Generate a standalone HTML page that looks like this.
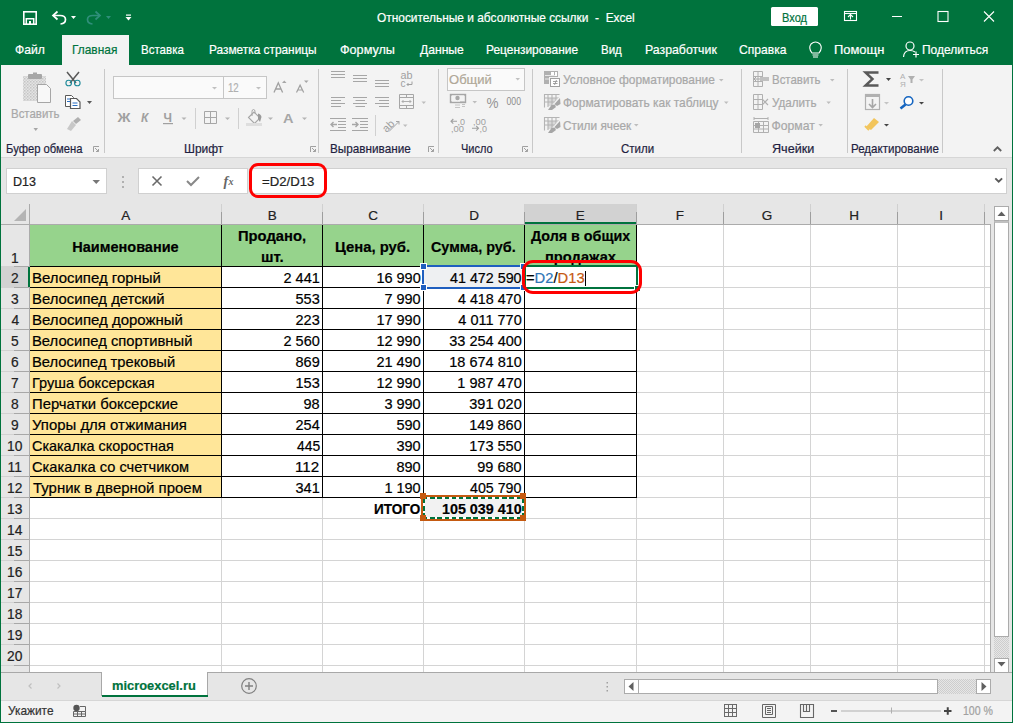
<!DOCTYPE html>
<html><head><meta charset="utf-8">
<style>
html,body{margin:0;padding:0;}
body{width:1013px;height:723px;position:relative;overflow:hidden;background:#e6e6e6;font-family:"Liberation Sans",sans-serif;}
.a{position:absolute;box-sizing:border-box;}
.t{position:absolute;white-space:pre;transform-origin:0 0;-webkit-text-stroke:0.2px currentColor;}
svg{position:absolute;overflow:visible;}
</style></head><body>
<!-- title + tabs -->
<div class="a" style="left:0;top:0;width:1013px;height:65px;background:#00733d"></div>
<div class="a" style="left:62px;top:35px;width:67px;height:30px;background:#f3f3f3"></div>
<!-- ribbon -->
<div class="a" style="left:0;top:65px;width:1013px;height:92px;background:#f3f3f3"></div>
<div class="a" style="left:0;top:157px;width:1013px;height:1px;background:#d6d6d6"></div>
<!-- group separators -->
<div class="a" style="left:104px;top:69px;width:1px;height:84px;background:#c8c8c8"></div>
<div class="a" style="left:318px;top:69px;width:1px;height:84px;background:#c8c8c8"></div>
<div class="a" style="left:438px;top:69px;width:1px;height:84px;background:#c8c8c8"></div>
<div class="a" style="left:532px;top:69px;width:1px;height:84px;background:#c8c8c8"></div>
<div class="a" style="left:741px;top:69px;width:1px;height:84px;background:#c8c8c8"></div>
<div class="a" style="left:847px;top:69px;width:1px;height:84px;background:#c8c8c8"></div>
<div class="a" style="left:942px;top:69px;width:1px;height:84px;background:#c8c8c8"></div>
<!-- formula bar -->
<div class="a" style="left:6px;top:168px;width:101px;height:26px;background:#fff;border:1px solid #d0d0d0"></div>
<div class="a" style="left:138px;top:168px;width:110px;height:26px;background:#fff;border:1px solid #d0d0d0"></div>
<div class="a" style="left:250px;top:168px;width:757px;height:26px;background:#fff;border:1px solid #d0d0d0"></div>
<!-- grid -->
<div class="a" style="left:29px;top:225px;width:961px;height:447px;background:#fff"></div>
<div class='a' style='left:1px;top:204px;width:989px;height:20px;background:#e6e6e6;'></div>
<div class='a' style='left:1px;top:225px;width:28px;height:447px;background:#e6e6e6;'></div>
<div class='a' style='left:525px;top:204px;width:111px;height:20px;background:#d2d2d2;'></div>
<div class='a' style='left:1px;top:267px;width:28px;height:20px;background:#d2d2d2;'></div>
<div class='a' style='left:221px;top:225px;width:1px;height:447px;background:#d4d4d4;'></div>
<div class='a' style='left:322px;top:225px;width:1px;height:447px;background:#d4d4d4;'></div>
<div class='a' style='left:423px;top:225px;width:1px;height:447px;background:#d4d4d4;'></div>
<div class='a' style='left:524px;top:225px;width:1px;height:447px;background:#d4d4d4;'></div>
<div class='a' style='left:636px;top:225px;width:1px;height:447px;background:#d4d4d4;'></div>
<div class='a' style='left:723px;top:225px;width:1px;height:447px;background:#d4d4d4;'></div>
<div class='a' style='left:810px;top:225px;width:1px;height:447px;background:#d4d4d4;'></div>
<div class='a' style='left:897px;top:225px;width:1px;height:447px;background:#d4d4d4;'></div>
<div class='a' style='left:984px;top:225px;width:1px;height:447px;background:#d4d4d4;'></div>
<div class='a' style='left:30px;top:266px;width:960px;height:1px;background:#d4d4d4;'></div>
<div class='a' style='left:30px;top:287px;width:960px;height:1px;background:#d4d4d4;'></div>
<div class='a' style='left:30px;top:308px;width:960px;height:1px;background:#d4d4d4;'></div>
<div class='a' style='left:30px;top:329px;width:960px;height:1px;background:#d4d4d4;'></div>
<div class='a' style='left:30px;top:350px;width:960px;height:1px;background:#d4d4d4;'></div>
<div class='a' style='left:30px;top:371px;width:960px;height:1px;background:#d4d4d4;'></div>
<div class='a' style='left:30px;top:392px;width:960px;height:1px;background:#d4d4d4;'></div>
<div class='a' style='left:30px;top:413px;width:960px;height:1px;background:#d4d4d4;'></div>
<div class='a' style='left:30px;top:434px;width:960px;height:1px;background:#d4d4d4;'></div>
<div class='a' style='left:30px;top:455px;width:960px;height:1px;background:#d4d4d4;'></div>
<div class='a' style='left:30px;top:476px;width:960px;height:1px;background:#d4d4d4;'></div>
<div class='a' style='left:30px;top:497px;width:960px;height:1px;background:#d4d4d4;'></div>
<div class='a' style='left:30px;top:518px;width:960px;height:1px;background:#d4d4d4;'></div>
<div class='a' style='left:30px;top:539px;width:960px;height:1px;background:#d4d4d4;'></div>
<div class='a' style='left:30px;top:560px;width:960px;height:1px;background:#d4d4d4;'></div>
<div class='a' style='left:30px;top:581px;width:960px;height:1px;background:#d4d4d4;'></div>
<div class='a' style='left:30px;top:602px;width:960px;height:1px;background:#d4d4d4;'></div>
<div class='a' style='left:30px;top:623px;width:960px;height:1px;background:#d4d4d4;'></div>
<div class='a' style='left:30px;top:644px;width:960px;height:1px;background:#d4d4d4;'></div>
<div class='a' style='left:30px;top:665px;width:960px;height:1px;background:#d4d4d4;'></div>
<div class='a' style='left:30px;top:686px;width:960px;height:1px;background:#d4d4d4;'></div>
<div class='a' style='left:221px;top:204px;width:1px;height:8px;background:#d0d0d0;'></div>
<div class='a' style='left:221px;top:212px;width:1px;height:12px;background:#9e9e9e;'></div>
<div class='a' style='left:322px;top:204px;width:1px;height:8px;background:#d0d0d0;'></div>
<div class='a' style='left:322px;top:212px;width:1px;height:12px;background:#9e9e9e;'></div>
<div class='a' style='left:423px;top:204px;width:1px;height:8px;background:#d0d0d0;'></div>
<div class='a' style='left:423px;top:212px;width:1px;height:12px;background:#9e9e9e;'></div>
<div class='a' style='left:524px;top:204px;width:1px;height:8px;background:#d0d0d0;'></div>
<div class='a' style='left:524px;top:212px;width:1px;height:12px;background:#9e9e9e;'></div>
<div class='a' style='left:636px;top:204px;width:1px;height:8px;background:#d0d0d0;'></div>
<div class='a' style='left:636px;top:212px;width:1px;height:12px;background:#9e9e9e;'></div>
<div class='a' style='left:723px;top:204px;width:1px;height:8px;background:#d0d0d0;'></div>
<div class='a' style='left:723px;top:212px;width:1px;height:12px;background:#9e9e9e;'></div>
<div class='a' style='left:810px;top:204px;width:1px;height:8px;background:#d0d0d0;'></div>
<div class='a' style='left:810px;top:212px;width:1px;height:12px;background:#9e9e9e;'></div>
<div class='a' style='left:897px;top:204px;width:1px;height:8px;background:#d0d0d0;'></div>
<div class='a' style='left:897px;top:212px;width:1px;height:12px;background:#9e9e9e;'></div>
<div class='a' style='left:984px;top:204px;width:1px;height:8px;background:#d0d0d0;'></div>
<div class='a' style='left:984px;top:212px;width:1px;height:12px;background:#9e9e9e;'></div>
<div class='a' style='left:1px;top:266px;width:13px;height:1px;background:#d2d2d2;'></div>
<div class='a' style='left:14px;top:266px;width:15px;height:1px;background:#a8a8a8;'></div>
<div class='a' style='left:1px;top:287px;width:13px;height:1px;background:#d2d2d2;'></div>
<div class='a' style='left:14px;top:287px;width:15px;height:1px;background:#a8a8a8;'></div>
<div class='a' style='left:1px;top:308px;width:13px;height:1px;background:#d2d2d2;'></div>
<div class='a' style='left:14px;top:308px;width:15px;height:1px;background:#a8a8a8;'></div>
<div class='a' style='left:1px;top:329px;width:13px;height:1px;background:#d2d2d2;'></div>
<div class='a' style='left:14px;top:329px;width:15px;height:1px;background:#a8a8a8;'></div>
<div class='a' style='left:1px;top:350px;width:13px;height:1px;background:#d2d2d2;'></div>
<div class='a' style='left:14px;top:350px;width:15px;height:1px;background:#a8a8a8;'></div>
<div class='a' style='left:1px;top:371px;width:13px;height:1px;background:#d2d2d2;'></div>
<div class='a' style='left:14px;top:371px;width:15px;height:1px;background:#a8a8a8;'></div>
<div class='a' style='left:1px;top:392px;width:13px;height:1px;background:#d2d2d2;'></div>
<div class='a' style='left:14px;top:392px;width:15px;height:1px;background:#a8a8a8;'></div>
<div class='a' style='left:1px;top:413px;width:13px;height:1px;background:#d2d2d2;'></div>
<div class='a' style='left:14px;top:413px;width:15px;height:1px;background:#a8a8a8;'></div>
<div class='a' style='left:1px;top:434px;width:13px;height:1px;background:#d2d2d2;'></div>
<div class='a' style='left:14px;top:434px;width:15px;height:1px;background:#a8a8a8;'></div>
<div class='a' style='left:1px;top:455px;width:13px;height:1px;background:#d2d2d2;'></div>
<div class='a' style='left:14px;top:455px;width:15px;height:1px;background:#a8a8a8;'></div>
<div class='a' style='left:1px;top:476px;width:13px;height:1px;background:#d2d2d2;'></div>
<div class='a' style='left:14px;top:476px;width:15px;height:1px;background:#a8a8a8;'></div>
<div class='a' style='left:1px;top:497px;width:13px;height:1px;background:#d2d2d2;'></div>
<div class='a' style='left:14px;top:497px;width:15px;height:1px;background:#a8a8a8;'></div>
<div class='a' style='left:1px;top:518px;width:13px;height:1px;background:#d2d2d2;'></div>
<div class='a' style='left:14px;top:518px;width:15px;height:1px;background:#a8a8a8;'></div>
<div class='a' style='left:1px;top:539px;width:13px;height:1px;background:#d2d2d2;'></div>
<div class='a' style='left:14px;top:539px;width:15px;height:1px;background:#a8a8a8;'></div>
<div class='a' style='left:1px;top:560px;width:13px;height:1px;background:#d2d2d2;'></div>
<div class='a' style='left:14px;top:560px;width:15px;height:1px;background:#a8a8a8;'></div>
<div class='a' style='left:1px;top:581px;width:13px;height:1px;background:#d2d2d2;'></div>
<div class='a' style='left:14px;top:581px;width:15px;height:1px;background:#a8a8a8;'></div>
<div class='a' style='left:1px;top:602px;width:13px;height:1px;background:#d2d2d2;'></div>
<div class='a' style='left:14px;top:602px;width:15px;height:1px;background:#a8a8a8;'></div>
<div class='a' style='left:1px;top:623px;width:13px;height:1px;background:#d2d2d2;'></div>
<div class='a' style='left:14px;top:623px;width:15px;height:1px;background:#a8a8a8;'></div>
<div class='a' style='left:1px;top:644px;width:13px;height:1px;background:#d2d2d2;'></div>
<div class='a' style='left:14px;top:644px;width:15px;height:1px;background:#a8a8a8;'></div>
<div class='a' style='left:1px;top:665px;width:13px;height:1px;background:#d2d2d2;'></div>
<div class='a' style='left:14px;top:665px;width:15px;height:1px;background:#a8a8a8;'></div>
<div class='a' style='left:1px;top:686px;width:13px;height:1px;background:#d2d2d2;'></div>
<div class='a' style='left:14px;top:686px;width:15px;height:1px;background:#a8a8a8;'></div>
<div class='a' style='left:1px;top:224px;width:989px;height:1px;background:#ababab;'></div>
<div class='a' style='left:29px;top:204px;width:1px;height:468px;background:#ababab;'></div>
<div class='a' style='left:990px;top:224px;width:1px;height:448px;background:#ababab;'></div>
<div class='a' style='left:1px;top:672px;width:990px;height:1px;background:#ababab;'></div>
<svg style='left:0;top:0' width='1013' height='723'><polygon points='26,209 26,221 14,221' fill='#b4b4b4'/></svg>
<div class='a' style='left:30px;top:225px;width:606px;height:41px;background:#96d38c;'></div>
<div class='a' style='left:30px;top:266px;width:191px;height:231px;background:#ffe699;'></div>
<div class='a' style='left:424px;top:267px;width:100px;height:20px;background:#eef0f2;'></div>
<div class='a' style='left:424px;top:498px;width:100px;height:20px;background:#f2f2f2;'></div>
<div class='a' style='left:221px;top:225px;width:1px;height:273px;background:#000;'></div>
<div class='a' style='left:322px;top:225px;width:1px;height:273px;background:#000;'></div>
<div class='a' style='left:423px;top:225px;width:1px;height:273px;background:#000;'></div>
<div class='a' style='left:524px;top:225px;width:1px;height:273px;background:#000;'></div>
<div class='a' style='left:636px;top:225px;width:1px;height:273px;background:#000;'></div>
<div class='a' style='left:30px;top:266px;width:607px;height:1px;background:#000;'></div>
<div class='a' style='left:30px;top:287px;width:607px;height:1px;background:#000;'></div>
<div class='a' style='left:30px;top:308px;width:607px;height:1px;background:#000;'></div>
<div class='a' style='left:30px;top:329px;width:607px;height:1px;background:#000;'></div>
<div class='a' style='left:30px;top:350px;width:607px;height:1px;background:#000;'></div>
<div class='a' style='left:30px;top:371px;width:607px;height:1px;background:#000;'></div>
<div class='a' style='left:30px;top:392px;width:607px;height:1px;background:#000;'></div>
<div class='a' style='left:30px;top:413px;width:607px;height:1px;background:#000;'></div>
<div class='a' style='left:30px;top:434px;width:607px;height:1px;background:#000;'></div>
<div class='a' style='left:30px;top:455px;width:607px;height:1px;background:#000;'></div>
<div class='a' style='left:30px;top:476px;width:607px;height:1px;background:#000;'></div>
<div class='a' style='left:30px;top:497px;width:607px;height:1px;background:#000;'></div>
<div class='a' style='left:29px;top:225px;width:1px;height:447px;background:#ababab;'></div>
<!-- window border -->
<div class="a" style="left:0;top:35px;width:1px;height:688px;background:#00733d"></div>
<div class="a" style="left:1012px;top:35px;width:1px;height:688px;background:#00733d"></div>
<div class="a" style="left:0;top:722px;width:1013px;height:1px;background:#00733d"></div>
<svg style="left:0;top:0" width="1013" height="723"><rect x='23.8' y='11.8' width='12.4' height='12.4' fill='none' stroke='#fff' stroke-width='1.6'/><path d='M26.3 24v-5.3h7.4v5.3' fill='none' stroke='#fff' stroke-width='1.5'/><rect x='29' y='21' width='2' height='3' fill='#fff'/><path d='M57.5 11.5L53 15.5L57.5 19.5' fill='none' stroke='#fff' stroke-width='1.7'/><path d='M53.5 15.5H60Q65.5 15.5 65.5 19.5Q65.5 23.5 60.5 24' fill='none' stroke='#fff' stroke-width='1.7'/><polygon points='71,16 76,16 73.5,19' fill='#fff'/><path d='M95.5 11.5L100 15.5L95.5 19.5' fill='none' stroke='#2f8f7a' stroke-width='1.7'/><path d='M99.5 15.5H93Q87.5 15.5 87.5 19.5Q87.5 23.5 92.5 24' fill='none' stroke='#2f8f7a' stroke-width='1.7'/><polygon points='106,16 111,16 108.5,19' fill='#2f8f7a'/><rect x='126' y='14.5' width='5' height='1.2' fill='#fff'/><polygon points='125.5,17 131.5,17 128.5,20.5' fill='#fff'/><rect x='771' y='7' width='47' height='19' rx='1.5' fill='#fff'/><rect x='844.5' y='11.5' width='12' height='9' fill='none' stroke='#fff' stroke-width='1.1'/><path d='M844.5 13.5h12' stroke='#fff' stroke-width='1.1'/><path d='M850.5 19.5v-5M848 17l2.5-2.5 2.5 2.5' fill='none' stroke='#fff' stroke-width='1.1'/><rect x='892' y='16' width='10' height='1' fill='#fff'/><rect x='938' y='11.5' width='10' height='10' fill='none' stroke='#fff' stroke-width='1.1'/><path d='M984 11.5l10 10M994 11.5l-10 10' stroke='#fff' stroke-width='1.1'/><path d='M812 53 Q808 48 811 44 Q815.5 40 820 44 Q823 48 819 53 z' fill='none' stroke='#fff' stroke-width='1.1'/><path d='M812.5 55h6M813 57h5' stroke='#fff' stroke-width='1.1'/><circle cx='910' cy='46' r='4' fill='none' stroke='#fff' stroke-width='1.2'/><path d='M903.5 57 Q904 50.5 910 50.5 Q913 50.5 915 52' fill='none' stroke='#fff' stroke-width='1.2'/><path d='M913 54.5h6M916 51.5v6' stroke='#fff' stroke-width='1.2'/><defs><pattern id='hp' width='3' height='3' patternUnits='userSpaceOnUse'><rect width='3' height='3' fill='#e4e4e4'/><rect width='1.5' height='1.5' fill='#c4c4c4'/><rect x='1.5' y='1.5' width='1.5' height='1.5' fill='#cfcfcf'/></pattern></defs><rect x='23' y='76' width='23' height='25' fill='url(#hp)'/><rect x='28' y='74' width='14' height='5' rx='1' fill='#a6a6a6'/><rect x='33' y='72.5' width='4' height='3' fill='#a6a6a6'/><path d='M37.5 84.5h9l4 4v14h-13z' fill='#f8f8f8' stroke='#a6a6a6' stroke-width='1'/><polygon points='33.5,128 38,128 35.75,131' fill='#a6a6a6'/><path d='M67 72 L76 83 M79 72 L70 83' stroke='#595959' stroke-width='1.5'/><circle cx='68.7' cy='83' r='2.8' fill='none' stroke='#1f8a9a' stroke-width='1.1'/><circle cx='77.3' cy='83' r='2.8' fill='none' stroke='#1f8a9a' stroke-width='1.1'/><path d='M65.5 95.5h6l2 2v9h-8z' fill='#fff' stroke='#595959' stroke-width='1'/><path d='M70.5 98.5h6l3.5 3.5v6.5h-9.5z' fill='#fff' stroke='#595959' stroke-width='1.2'/><path d='M67 99h3M67 101.5h3M72.5 103h5M72.5 105.5h5' stroke='#2b6fc2' stroke-width='1'/><polygon points='87,101 92,101 89.5,104' fill='#595959'/><path d='M67 129 L72 121 L76 125 L71 131z' fill='#c8c8c8'/><path d='M73 121 L78 117 L81 120 L76 124z' fill='#b0b0b0'/><rect x='113.5' y='76.5' width='110' height='22' fill='#fafafa' stroke='#c6c6c6'/><rect x='223.5' y='76.5' width='43' height='22' fill='#fafafa' stroke='#c6c6c6'/><polygon points='212,87 217,87 214.5,89.5' fill='#c0c0c0'/><polygon points='256,87 261,87 258.5,89.5' fill='#c0c0c0'/><path d='M274 92.5l4.3-9.7 4.3 9.7M275.6 89h5.4' fill='none' stroke='#a0a0a0' stroke-width='1.3'/><polygon points='282,83 286.5,83 284.25,80.5' fill='#a6a6a6'/><path d='M296.5 92.5l3.6-7.3 3.6 7.3M297.8 90h4.6' fill='none' stroke='#a0a0a0' stroke-width='1.2'/><polygon points='304,80.5 308.5,80.5 306.25,83' fill='#a6a6a6'/><text x='117.5' y='122' font-family='Liberation Sans' font-weight='700' font-size='13' fill='#a0a0a0' textLength='13' lengthAdjust='spacingAndGlyphs'>Ж</text><text x='141' y='122' font-family='Liberation Sans' font-weight='700' font-style='italic' font-size='12' fill='#a0a0a0'>К</text><text x='163.5' y='122' font-family='Liberation Sans' font-weight='700' font-size='12' fill='#a0a0a0'>Ч</text><rect x='163' y='123' width='10' height='1.2' fill='#a0a0a0'/><polygon points='181.5,117.5 186.5,117.5 184.0,120' fill='#b4b4b4'/><polygon points='225,117.5 230,117.5 227.5,120' fill='#b4b4b4'/><polygon points='268,117.5 273,117.5 270.5,120' fill='#b4b4b4'/><polygon points='302,117.5 307,117.5 304.5,120' fill='#b4b4b4'/><rect x='195' y='108' width='1' height='21' fill='#d0d0d0'/><rect x='238' y='108' width='1' height='21' fill='#d0d0d0'/><path d='M204.5 111.5h12v12h-12zM210.5 111.5v12M204.5 117.5h12' fill='none' stroke='#a6a6a6' stroke-width='1'/><path d='M248.5 117.5l5.5-5.5 6 6-5.5 5.5z' fill='none' stroke='#a6a6a6' stroke-width='1.1'/><path d='M252 116v-4.5q0-2 1.5-2t1.5 2v2' fill='none' stroke='#a6a6a6' stroke-width='1'/><path d='M258 113.5q3 0.5 3.5 3.5l-1.5 5-2-3z' fill='#9a9a9a'/><rect x='246' y='123' width='16' height='3' fill='#dedede'/><text x='283' y='122.5' font-family='Liberation Sans' font-weight='700' font-size='13.5' fill='#a6a6a6' textLength='10.5' lengthAdjust='spacingAndGlyphs'>A</text><path d='M93.5 152v-5.5h5.5' fill='none' stroke='#a0a0a0' stroke-width='1'/><path d='M95 148l3.5 3.5M98.5 149v2.5h-2.5' fill='none' stroke='#a0a0a0' stroke-width='1'/><path d='M310.5 152v-5.5h5.5' fill='none' stroke='#a0a0a0' stroke-width='1'/><path d='M312 148l3.5 3.5M315.5 149v2.5h-2.5' fill='none' stroke='#a0a0a0' stroke-width='1'/><path d='M428.5 152v-5.5h5.5' fill='none' stroke='#a0a0a0' stroke-width='1'/><path d='M430 148l3.5 3.5M433.5 149v2.5h-2.5' fill='none' stroke='#a0a0a0' stroke-width='1'/><path d='M522.5 152v-5.5h5.5' fill='none' stroke='#a0a0a0' stroke-width='1'/><path d='M524 148l3.5 3.5M527.5 149v2.5h-2.5' fill='none' stroke='#a0a0a0' stroke-width='1'/><rect x='331' y='71' width='14' height='1' fill='#a6a6a6'/><rect x='331' y='74' width='14' height='1' fill='#a6a6a6'/><rect x='331' y='77' width='14' height='1' fill='#a6a6a6'/><rect x='353' y='75' width='14' height='1' fill='#a6a6a6'/><rect x='353' y='78' width='14' height='1' fill='#a6a6a6'/><rect x='353' y='81' width='14' height='1' fill='#a6a6a6'/><rect x='375' y='80' width='14' height='1' fill='#a6a6a6'/><rect x='375' y='83' width='14' height='1' fill='#a6a6a6'/><rect x='375' y='86' width='14' height='1' fill='#a6a6a6'/><text x='400.5' y='79' font-family='Liberation Sans' font-size='10' fill='#a0a0a0' textLength='12' lengthAdjust='spacingAndGlyphs'>ab</text><text x='400.5' y='87' font-family='Liberation Sans' font-size='10' fill='#a0a0a0'>c</text><path d='M412 81.5v3h-5M408.5 83l-1.5 1.5 1.5 1.5' fill='none' stroke='#a0a0a0' stroke-width='1'/><rect x='331' y='97' width='14' height='1' fill='#a6a6a6'/><rect x='353' y='97' width='14' height='1' fill='#a6a6a6'/><rect x='375' y='97' width='14' height='1' fill='#a6a6a6'/><rect x='331' y='100' width='10' height='1' fill='#a6a6a6'/><rect x='355.5' y='100' width='9.5' height='1' fill='#a6a6a6'/><rect x='379' y='100' width='10' height='1' fill='#a6a6a6'/><rect x='331' y='103' width='14' height='1' fill='#a6a6a6'/><rect x='353' y='103' width='14' height='1' fill='#a6a6a6'/><rect x='375' y='103' width='14' height='1' fill='#a6a6a6'/><rect x='331' y='106' width='10' height='1' fill='#a6a6a6'/><rect x='355.5' y='106' width='9.5' height='1' fill='#a6a6a6'/><rect x='379' y='106' width='10' height='1' fill='#a6a6a6'/><path d='M399.5 94.5h14v14h-14zM399.5 97.5h14M399.5 105.5h14M406.5 94.5v3M406.5 105.5v3' fill='none' stroke='#a6a6a6' stroke-width='1'/><path d='M402 101.5h9M403.5 100l-1.5 1.5 1.5 1.5M409.5 100l1.5 1.5-1.5 1.5' fill='none' stroke='#a6a6a6' stroke-width='0.9'/><polygon points='421.5,101.5 426,101.5 423.75,104' fill='#bdbdbd'/><rect x='330' y='118' width='16' height='1' fill='#a6a6a6'/><rect x='352' y='118' width='16' height='1' fill='#a6a6a6'/><rect x='338' y='121' width='8' height='1' fill='#a6a6a6'/><rect x='360' y='121' width='8' height='1' fill='#a6a6a6'/><rect x='338' y='124' width='8' height='1' fill='#a6a6a6'/><rect x='360' y='124' width='8' height='1' fill='#a6a6a6'/><rect x='338' y='127' width='8' height='1' fill='#a6a6a6'/><rect x='360' y='127' width='8' height='1' fill='#a6a6a6'/><rect x='330' y='130' width='16' height='1' fill='#a6a6a6'/><rect x='352' y='130' width='16' height='1' fill='#a6a6a6'/><path d='M337 124.5h-6M333.5 122l-2.5 2.5 2.5 2.5' fill='none' stroke='#a6a6a6' stroke-width='1.4'/><path d='M352 124.5h6M355.5 122l2.5 2.5-2.5 2.5' fill='none' stroke='#a6a6a6' stroke-width='1.4'/><rect x='375' y='115' width='1' height='21' fill='#d0d0d0'/><text x='382' y='130' font-family='Liberation Sans' font-size='11' fill='#a0a0a0' transform='rotate(-45 388 126)'>ab</text><path d='M389 131.5l10-10M396 121.5h3v3' fill='none' stroke='#a6a6a6' stroke-width='1'/><polygon points='403,124.5 407.5,124.5 405.25,127' fill='#bdbdbd'/><rect x='447.5' y='68.5' width='77' height='22' fill='#fafafa' stroke='#c6c6c6'/><polygon points='515.5,78 520,78 517.75,80.5' fill='#c0c0c0'/><rect x='450.5' y='94.5' width='15' height='8' fill='none' stroke='#a6a6a6' stroke-width='1.4'/><polygon points='450,94 453,94 450,97' fill='#a6a6a6'/><polygon points='466,94 463,94 466,97' fill='#a6a6a6'/><polygon points='450,103 453,103 450,100' fill='#a6a6a6'/><circle cx='457.5' cy='98' r='2.2' fill='#a8a8a8'/><path d='M460 101.5h5M455 105h5M455 107.5h5M462 104.5h3M462 106.5h3' stroke='#c4c4c4' stroke-width='1'/><polygon points='472.5,101 477,101 474.75,103.5' fill='#bdbdbd'/><text x='486.5' y='107.8' font-family='Liberation Sans' font-size='14' fill='#959595' textLength='12' lengthAdjust='spacingAndGlyphs'>%</text><text x='506.5' y='105.2' font-family='Liberation Sans' font-size='10' fill='#8c8c8c' textLength='14.5' lengthAdjust='spacingAndGlyphs'>000</text><text x='457.5' y='124.5' font-family='Liberation Sans' font-size='9' fill='#a0a0a0'>,0</text><text x='451' y='131.5' font-family='Liberation Sans' font-size='9' fill='#a0a0a0' textLength='13' lengthAdjust='spacingAndGlyphs'>,00</text><path d='M457 121.3h-6M453.3 119l-2.3 2.3 2.3 2.3' fill='none' stroke='#a0a0a0' stroke-width='1.1'/><text x='473' y='124.5' font-family='Liberation Sans' font-size='9' fill='#a0a0a0' textLength='13' lengthAdjust='spacingAndGlyphs'>,00</text><text x='479.5' y='131.5' font-family='Liberation Sans' font-size='9' fill='#a0a0a0'>,0</text><path d='M472 128.3h6.5M476.2 126l2.3 2.3-2.3 2.3' fill='none' stroke='#a0a0a0' stroke-width='1.1'/><rect x='548' y='98' width='8' height='8' fill='#d8d8d8'/><path d='M544.5 107.5v-13h15M548 95v12M552 95v11M556 95v6M545 98h14M545 102h10' fill='none' stroke='#b4b4b4' stroke-width='1.1'/><polygon points='547,111 560,96 560,99 549,111' fill='#f3f3f3'/><polygon points='560,98 560.5,104 557,106 554.5,104' fill='#a6a6a6'/><polygon points='548,110 551.5,105 554.5,104.5 556,107 552,110' fill='#a6a6a6'/><rect x='548' y='121' width='8' height='8' fill='#d8d8d8'/><path d='M544.5 130.5v-13h15M548 118v12M552 118v11M556 118v6M545 121h14M545 125h10' fill='none' stroke='#b4b4b4' stroke-width='1.1'/><polygon points='547,134 560,119 560,122 549,134' fill='#f3f3f3'/><polygon points='560,121 560.5,127 557,129 554.5,127' fill='#a6a6a6'/><polygon points='548,133 551.5,128 554.5,127.5 556,130 552,133' fill='#a6a6a6'/><rect x='544' y='71' width='14' height='13' fill='#b0b0b0'/><rect x='551' y='72' width='3' height='4' fill='#fff'/><rect x='555' y='72' width='2' height='4' fill='#fff'/><rect x='545' y='75' width='10' height='1' fill='#e8e8e8'/><rect x='545' y='78.5' width='5' height='1' fill='#e8e8e8'/><rect x='549' y='77' width='12' height='11' fill='#f3f3f3'/><rect x='550.5' y='78.5' width='9' height='8' fill='#fff' stroke='#a0a0a0' stroke-width='1'/><path d='M553 81.5h4.5M553 83.5h4.5M556.5 80l-2 5' stroke='#999' stroke-width='0.9'/><polygon points='719,79 723.5,79 721.25,81.5' fill='#bdbdbd'/><polygon points='724,101.5 728.5,101.5 726.25,104.0' fill='#bdbdbd'/><polygon points='634,124 638.5,124 636.25,126.5' fill='#bdbdbd'/><path d='M753.5 71.5h9v15h-9zM753.5 76.5h9M753.5 81.5h9M758 71.5v15' fill='none' stroke='#b0b0b0' stroke-width='1'/><path d='M753.5 94.5h9v15h-9zM753.5 99.5h9M753.5 104.5h9M758 94.5v15' fill='none' stroke='#b0b0b0' stroke-width='1'/><rect x='760' y='77' width='9' height='4' fill='#c0c0c0'/><path d='M760 79h-6M756 77l-2 2 2 2' fill='none' stroke='#a6a6a6' stroke-width='1'/><path d='M762 99l6 6M768 99l-6 6' stroke='#b0b0b0' stroke-width='1.2'/><path d='M753.5 121.5h15v11h-15zM753.5 125.5h15M753.5 129h15M758.5 121.5v11M763.5 121.5v11' fill='none' stroke='#b0b0b0' stroke-width='1'/><rect x='755' y='123' width='5' height='5' fill='#a6a6a6'/><path d='M754 118.5h14M754 117v3M768 117v3' stroke='#b0b0b0' stroke-width='1'/><polygon points='830,79 834.5,79 832.25,81.5' fill='#bdbdbd'/><polygon points='826.4,101.5 830.9,101.5 828.65,104.0' fill='#bdbdbd'/><polygon points='818.4,124 822.9,124 820.65,126.5' fill='#bdbdbd'/><path d='M878.5 72.5h-13l7 6.5-7 6.5h13' fill='none' stroke='#595959' stroke-width='2.4' stroke-linejoin='miter'/><polygon points='886,78 891,78 888.5,81' fill='#444'/><text x='900' y='78.5' font-family='Liberation Sans' font-size='8' fill='#b0b0b0'>А</text><text x='900' y='87' font-family='Liberation Sans' font-size='8' fill='#b0b0b0'>Я</text><polygon points='908,76 915,76 912.5,79.5 912.5,83 910.5,83 910.5,79.5' fill='#b0b0b0'/><polygon points='919,79 924,79 921.5,81.5' fill='#c4c4c4'/><rect x='865.5' y='94.5' width='14' height='15' fill='none' stroke='#b0b0b0' stroke-width='1.2'/><rect x='865' y='94' width='15' height='3' fill='#b0b0b0'/><path d='M872.5 99v8M869 104l3.5 3.5 3.5-3.5' fill='none' stroke='#a6a6a6' stroke-width='1.6'/><polygon points='884,102 889,102 886.5,104.5' fill='#c4c4c4'/><circle cx='908.5' cy='101' r='4.3' fill='#fff' stroke='#1565c0' stroke-width='1.6'/><path d='M905.5 104.5l-5 4' stroke='#1565c0' stroke-width='2.6'/><polygon points='919,102 924,102 921.5,104.5' fill='#444'/><path d='M866 127l8-9 5 4-8 8z' fill='#f2c55c'/><path d='M865 126l4 4' stroke='#f2c55c' stroke-width='2'/><polygon points='884,124 889,124 886.5,126.5' fill='#444'/><path d='M993.8 151l3.7-3.7 3.7 3.7' fill='none' stroke='#606060' stroke-width='1.8'/><polygon points='92.5,180 100,180 96.25,184' fill='#777'/><rect x='122' y='176' width='2' height='2' fill='#b0b0b0'/><rect x='122' y='181' width='2' height='2' fill='#b0b0b0'/><rect x='122' y='186' width='2' height='2' fill='#b0b0b0'/><path d='M152.5 176.5l9 9M161.5 176.5l-9 9' stroke='#6a6a6a' stroke-width='1.6'/><path d='M187 181l4 4 8-8' fill='none' stroke='#888' stroke-width='2'/><text x='223.5' y='186' font-family='Liberation Serif' font-style='italic' font-weight='700' font-size='14' fill='#666'>f</text><text x='228.5' y='185' font-family='Liberation Serif' font-style='italic' font-weight='700' font-size='10' fill='#666'>x</text><path d='M995.3 178.3l3.4 3.4 3.4-3.4' fill='none' stroke='#5a5a5a' stroke-width='1.9'/></svg><div class='a' style='left:991px;top:204px;width:21px;height:468px;background:#e6e6e6;'></div>
<div class='a' style='left:994px;top:206px;width:15px;height:15px;background:#fff;border:1px solid #ababab'></div>
<div class='a' style='left:994px;top:221px;width:15px;height:416px;background:#fff;border:1px solid #ababab;border-top:2px solid #c0c0c0'></div>
<div class='a' style='left:994px;top:637px;width:15px;height:21px;background:#d9d9d9;background-image:repeating-conic-gradient(#cdcdcd 0 25%,#e6e6e6 0 50%);background-size:2px 2px'></div>
<div class='a' style='left:994px;top:658px;width:15px;height:15px;background:#fff;border:1px solid #ababab'></div>
<svg style='left:0;top:0' width='1013' height='723'><polygon points='997.5,216 1005.5,216 1001.5,211.5' fill='#606060'/><polygon points='997.5,662 1005.5,662 1001.5,666.5' fill='#606060'/></svg>
<div class='a' style='left:1px;top:672px;width:1011px;height:28px;background:#e6e6e6;'></div>
<div class='a' style='left:1px;top:672px;width:101px;height:1px;background:#a8a8a8;'></div>
<div class='a' style='left:208px;top:672px;width:804px;height:1px;background:#a8a8a8;'></div>
<div class='a' style='left:101px;top:672px;width:107px;height:24px;background:#fff;border-left:1px solid #a8a8a8;border-right:1px solid #a8a8a8'></div>
<div class='a' style='left:102px;top:695px;width:106px;height:2px;background:#00733d;'></div>
<svg style='left:0;top:0' width='1013' height='723'><path d='M31.5 683.5l-2.5 2.5 2.5 2.5' fill='none' stroke='#c0c0c0' stroke-width='1.2'/><path d='M57.5 683.5l2.5 2.5-2.5 2.5' fill='none' stroke='#c0c0c0' stroke-width='1.2'/><circle cx='249' cy='686' r='7.3' fill='none' stroke='#808080' stroke-width='1.2'/><path d='M249 682v8M245 686h8' stroke='#808080' stroke-width='1.4'/><rect x='606.5' y='682' width='1.5' height='1.5' fill='#a0a0a0'/><rect x='606.5' y='686' width='1.5' height='1.5' fill='#a0a0a0'/><rect x='606.5' y='690' width='1.5' height='1.5' fill='#a0a0a0'/></svg>
<div class='a' style='left:624px;top:679px;width:15px;height:15px;background:#fff;border:1px solid #ababab'></div>
<div class='a' style='left:638px;top:679px;width:300px;height:15px;background:#fff;border:1px solid #ababab'></div>
<div class='a' style='left:938px;top:679px;width:38px;height:15px;background:#d9d9d9;background-image:repeating-conic-gradient(#cdcdcd 0 25%,#e6e6e6 0 50%);background-size:2px 2px'></div>
<div class='a' style='left:976px;top:679px;width:15px;height:15px;background:#fff;border:1px solid #ababab'></div>
<svg style='left:0;top:0' width='1013' height='723'><polygon points='628.5,686.5 633.5,682 633.5,691' fill='#606060'/><polygon points='986.5,686.5 981.5,682 981.5,691' fill='#606060'/></svg>
<div class='a' style='left:1px;top:700px;width:1011px;height:22px;background:#f3f3f3;'></div>
<div class='a' style='left:1px;top:700px;width:1011px;height:1px;background:#d6d6d6;'></div>
<svg style='left:0;top:0' width='1013' height='723'><circle cx='76.5' cy='708' r='3.2' fill='#555'/><path d='M73.5 711.5h12v5h-12zM73.5 714h12M77.5 711.5v5M81.5 711.5v5M80 706.5h5.5v5' fill='none' stroke='#666' stroke-width='1'/><rect x='724' y='704' width='13' height='13' fill='#6a6a6a'/><rect x='725' y='705' width='3' height='3' fill='#f3f3f3'/><rect x='725' y='709' width='3' height='3' fill='#f3f3f3'/><rect x='725' y='713' width='3' height='3' fill='#f3f3f3'/><rect x='729' y='705' width='3' height='3' fill='#f3f3f3'/><rect x='729' y='709' width='3' height='3' fill='#f3f3f3'/><rect x='729' y='713' width='3' height='3' fill='#f3f3f3'/><rect x='733' y='705' width='3' height='3' fill='#f3f3f3'/><rect x='733' y='709' width='3' height='3' fill='#f3f3f3'/><rect x='733' y='713' width='3' height='3' fill='#f3f3f3'/><path d='M762.5 704.5h13v13h-13zM765.5 706.5h7v8h-7zM767 708.5h4M767 710.5h4M767 712.5h4' fill='none' stroke='#666' stroke-width='1'/><path d='M800.5 704.5h13v13h-13zM803.5 704.5v7h6v-7M806.5 704.5v7' fill='none' stroke='#666' stroke-width='1.1'/><rect x='831' y='710' width='6' height='2' fill='#555'/><rect x='841' y='710.5' width='100' height='1' fill='#b0b0b0'/><rect x='891' y='707.5' width='1' height='6' fill='#b0b0b0'/><path d='M944 711h7.5M947.75 707.25v7.5' stroke='#444' stroke-width='2'/></svg>
<div class='t' style="left:376.52px;top:12.47px;font-size:12.2px;line-height:12.2px;color:#fff;transform:scaleX(0.9771);">Относительные и абсолютные ссылки  -  Excel</div>
<div class='t' style="left:781.59px;top:12.07px;font-size:12.2px;line-height:12.2px;color:#00733d;transform:scaleX(0.9074);">Вход</div>
<div class='t' style="left:15.40px;top:44.27px;font-size:12.2px;line-height:12.2px;color:#fff;transform:scaleX(0.9964);">Файл</div>
<div class='t' style="left:72.02px;top:44.27px;font-size:12.2px;line-height:12.2px;color:#00733d;transform:scaleX(0.9778);">Главная</div>
<div class='t' style="left:141.05px;top:44.27px;font-size:12.2px;line-height:12.2px;color:#fff;transform:scaleX(0.9455);">Вставка</div>
<div class='t' style="left:208.53px;top:44.27px;font-size:12.2px;line-height:12.2px;color:#fff;transform:scaleX(0.9734);">Разметка страницы</div>
<div class='t' style="left:340.46px;top:44.27px;font-size:12.2px;line-height:12.2px;color:#fff;transform:scaleX(1.0353);">Формулы</div>
<div class='t' style="left:419.60px;top:44.27px;font-size:12.2px;line-height:12.2px;color:#fff;transform:scaleX(0.9955);">Данные</div>
<div class='t' style="left:486.02px;top:44.27px;font-size:12.2px;line-height:12.2px;color:#fff;transform:scaleX(0.9785);">Рецензирование</div>
<div class='t' style="left:601.46px;top:44.27px;font-size:12.2px;line-height:12.2px;color:#fff;transform:scaleX(0.9429);">Вид</div>
<div class='t' style="left:644.79px;top:44.27px;font-size:12.2px;line-height:12.2px;color:#fff;transform:scaleX(1.0100);">Разработчик</div>
<div class='t' style="left:738.61px;top:44.27px;font-size:12.2px;line-height:12.2px;color:#fff;transform:scaleX(0.9915);">Справка</div>
<div class='t' style="left:834.44px;top:44.27px;font-size:12.2px;line-height:12.2px;color:#fff;transform:scaleX(1.0609);">Помощн</div>
<div class='t' style="left:921.82px;top:44.27px;font-size:12.2px;line-height:12.2px;color:#fff;transform:scaleX(0.9833);">Поделиться</div>
<div class='t' style="left:5.68px;top:142.87px;font-size:12.2px;line-height:12.2px;color:#1f1f3f;transform:scaleX(0.9232);">Буфер обмена</div>
<div class='t' style="left:183.52px;top:142.87px;font-size:12.2px;line-height:12.2px;color:#1f1f3f;transform:scaleX(0.9795);">Шрифт</div>
<div class='t' style="left:329.54px;top:142.87px;font-size:12.2px;line-height:12.2px;color:#1f1f3f;transform:scaleX(0.9622);">Выравнивание</div>
<div class='t' style="left:460.70px;top:142.87px;font-size:12.2px;line-height:12.2px;color:#1f1f3f;transform:scaleX(0.9029);">Число</div>
<div class='t' style="left:620.66px;top:142.87px;font-size:12.2px;line-height:12.2px;color:#1f1f3f;transform:scaleX(0.9424);">Стили</div>
<div class='t' style="left:772.36px;top:142.87px;font-size:12.2px;line-height:12.2px;color:#1f1f3f;transform:scaleX(1.0359);">Ячейки</div>
<div class='t' style="left:850.85px;top:142.87px;font-size:12.2px;line-height:12.2px;color:#1f1f3f;transform:scaleX(0.9473);">Редактирование</div>
<div class='t' style="left:10.86px;top:108.37px;font-size:12.2px;line-height:12.2px;color:#a8a8a8;transform:scaleX(0.9400);">Вставить</div>
<div class='t' style="left:562.62px;top:74.07px;font-size:12.2px;line-height:12.2px;color:#a8a8a8;transform:scaleX(0.9792);">Условное форматирование</div>
<div class='t' style="left:563.02px;top:97.17px;font-size:12.2px;line-height:12.2px;color:#a8a8a8;transform:scaleX(0.9810);">Форматировать как таблицу</div>
<div class='t' style="left:563.03px;top:120.17px;font-size:12.2px;line-height:12.2px;color:#a8a8a8;transform:scaleX(0.9710);">Стили ячеек</div>
<div class='t' style="left:771.86px;top:74.07px;font-size:12.2px;line-height:12.2px;color:#a8a8a8;transform:scaleX(0.9400);">Вставить</div>
<div class='t' style="left:771.54px;top:97.17px;font-size:12.2px;line-height:12.2px;color:#a8a8a8;transform:scaleX(0.9556);">Удалить</div>
<div class='t' style="left:771.50px;top:120.17px;font-size:12.2px;line-height:12.2px;color:#a8a8a8;">Формат</div>
<div class='t' style="left:449.13px;top:74.47px;font-size:12.2px;line-height:12.2px;color:#b0a898;transform:scaleX(1.0684);">Общий</div>
<div class='t' style="left:227.51px;top:82.07px;font-size:12.2px;line-height:12.2px;color:#b0b0b0;transform:scaleX(0.7917);">12</div>
<div class='t' style="left:13.07px;top:176.17px;font-size:12.2px;line-height:12.2px;color:#222;transform:scaleX(1.0286);">D13</div>
<div class='t' style="left:262.42px;top:176.47px;font-size:12.2px;line-height:12.2px;color:#222;transform:scaleX(1.0787);">=D2/D13</div>
<div class='t' style="left:121.30px;top:209.17px;font-size:13.5px;line-height:13.5px;color:#222;">A</div>
<div class='t' style="left:267.80px;top:209.17px;font-size:13.5px;line-height:13.5px;color:#222;">B</div>
<div class='t' style="left:368.30px;top:209.17px;font-size:13.5px;line-height:13.5px;color:#222;">C</div>
<div class='t' style="left:469.30px;top:209.17px;font-size:13.5px;line-height:13.5px;color:#222;">D</div>
<div class='t' style="left:575.80px;top:209.17px;font-size:13.5px;line-height:13.5px;color:#222;">E</div>
<div class='t' style="left:675.80px;top:209.17px;font-size:13.5px;line-height:13.5px;color:#222;">F</div>
<div class='t' style="left:761.80px;top:209.17px;font-size:13.5px;line-height:13.5px;color:#222;">G</div>
<div class='t' style="left:849.30px;top:209.17px;font-size:13.5px;line-height:13.5px;color:#222;">H</div>
<div class='t' style="left:939.30px;top:209.17px;font-size:13.5px;line-height:13.5px;color:#222;">I</div>
<div class='t' style="left:11.00px;top:251.82px;font-size:13.8px;line-height:13.8px;color:#222;">1</div>
<div class='t' style="left:11.00px;top:271.82px;font-size:13.8px;line-height:13.8px;color:#222;">2</div>
<div class='t' style="left:11.00px;top:292.82px;font-size:13.8px;line-height:13.8px;color:#222;">3</div>
<div class='t' style="left:11.50px;top:313.82px;font-size:13.8px;line-height:13.8px;color:#222;">4</div>
<div class='t' style="left:11.00px;top:334.82px;font-size:13.8px;line-height:13.8px;color:#222;">5</div>
<div class='t' style="left:11.00px;top:355.82px;font-size:13.8px;line-height:13.8px;color:#222;">6</div>
<div class='t' style="left:11.00px;top:376.82px;font-size:13.8px;line-height:13.8px;color:#222;">7</div>
<div class='t' style="left:11.00px;top:397.82px;font-size:13.8px;line-height:13.8px;color:#222;">8</div>
<div class='t' style="left:11.00px;top:418.82px;font-size:13.8px;line-height:13.8px;color:#222;">9</div>
<div class='t' style="left:7.00px;top:439.82px;font-size:13.8px;line-height:13.8px;color:#222;">10</div>
<div class='t' style="left:7.50px;top:460.82px;font-size:13.8px;line-height:13.8px;color:#222;">11</div>
<div class='t' style="left:7.00px;top:481.82px;font-size:13.8px;line-height:13.8px;color:#222;">12</div>
<div class='t' style="left:7.00px;top:502.82px;font-size:13.8px;line-height:13.8px;color:#222;">13</div>
<div class='t' style="left:7.00px;top:523.82px;font-size:13.8px;line-height:13.8px;color:#222;">14</div>
<div class='t' style="left:7.00px;top:544.82px;font-size:13.8px;line-height:13.8px;color:#222;">15</div>
<div class='t' style="left:7.00px;top:565.82px;font-size:13.8px;line-height:13.8px;color:#222;">16</div>
<div class='t' style="left:7.00px;top:586.82px;font-size:13.8px;line-height:13.8px;color:#222;">17</div>
<div class='t' style="left:7.00px;top:607.82px;font-size:13.8px;line-height:13.8px;color:#222;">18</div>
<div class='t' style="left:7.00px;top:628.82px;font-size:13.8px;line-height:13.8px;color:#222;">19</div>
<div class='t' style="left:7.00px;top:649.82px;font-size:13.8px;line-height:13.8px;color:#222;">20</div>
<div class='t' style="left:72.30px;top:239.93px;font-size:14.5px;line-height:14.5px;color:#000;font-weight:700;">Наименование</div>
<div class='t' style="left:237.58px;top:228.93px;font-size:14.5px;line-height:14.5px;color:#000;font-weight:700;transform:scaleX(1.0169);">Продано,</div>
<div class='t' style="left:260.76px;top:249.73px;font-size:14.5px;line-height:14.5px;color:#000;font-weight:700;transform:scaleX(1.0350);">шт.</div>
<div class='t' style="left:335.38px;top:239.83px;font-size:14.5px;line-height:14.5px;color:#000;font-weight:700;transform:scaleX(1.0222);">Цена, руб.</div>
<div class='t' style="left:431.01px;top:239.83px;font-size:14.5px;line-height:14.5px;color:#000;font-weight:700;transform:scaleX(0.9905);">Сумма, руб.</div>
<div class='t' style="left:531.00px;top:228.83px;font-size:14.5px;line-height:14.5px;color:#000;font-weight:700;transform:scaleX(0.9850);">Доля в общих</div>
<div style='position:absolute;left:0;top:226px;width:1013px;height:40px;overflow:hidden'><div style='position:absolute;left:0;top:-226px'><div class='t' style="left:544.99px;top:250.23px;font-size:14.5px;line-height:14.5px;color:#000;font-weight:700;transform:scaleX(1.0116);">продажах</div></div></div>
<div class='t' style="left:32.07px;top:271.23px;font-size:14.5px;line-height:14.5px;color:#000;transform:scaleX(1.0317);">Велосипед горный</div>
<div class='t' style="left:283.50px;top:271.23px;font-size:14.5px;line-height:14.5px;color:#000;">2 441</div>
<div class='t' style="left:376.40px;top:271.23px;font-size:14.5px;line-height:14.5px;color:#000;">16 990</div>
<div class='t' style="left:450.30px;top:271.23px;font-size:14.5px;line-height:14.5px;color:#000;transform:scaleX(0.9861);">41 472 590</div>
<div class='t' style="left:32.08px;top:292.23px;font-size:14.5px;line-height:14.5px;color:#000;transform:scaleX(1.0227);">Велосипед детский</div>
<div class='t' style="left:295.50px;top:292.23px;font-size:14.5px;line-height:14.5px;color:#000;">553</div>
<div class='t' style="left:384.40px;top:292.23px;font-size:14.5px;line-height:14.5px;color:#000;">7 990</div>
<div class='t' style="left:458.30px;top:292.23px;font-size:14.5px;line-height:14.5px;color:#000;transform:scaleX(0.9844);">4 418 470</div>
<div class='t' style="left:32.07px;top:313.23px;font-size:14.5px;line-height:14.5px;color:#000;transform:scaleX(1.0326);">Велосипед дорожный</div>
<div class='t' style="left:295.50px;top:313.23px;font-size:14.5px;line-height:14.5px;color:#000;">223</div>
<div class='t' style="left:376.40px;top:313.23px;font-size:14.5px;line-height:14.5px;color:#000;">17 990</div>
<div class='t' style="left:458.30px;top:313.23px;font-size:14.5px;line-height:14.5px;color:#000;">4 011 770</div>
<div class='t' style="left:32.08px;top:334.23px;font-size:14.5px;line-height:14.5px;color:#000;transform:scaleX(1.0199);">Велосипед спортивный</div>
<div class='t' style="left:283.50px;top:334.23px;font-size:14.5px;line-height:14.5px;color:#000;">2 560</div>
<div class='t' style="left:376.40px;top:334.23px;font-size:14.5px;line-height:14.5px;color:#000;">12 990</div>
<div class='t' style="left:449.30px;top:334.23px;font-size:14.5px;line-height:14.5px;color:#000;">33 254 400</div>
<div class='t' style="left:32.08px;top:355.23px;font-size:14.5px;line-height:14.5px;color:#000;transform:scaleX(1.0158);">Велосипед трековый</div>
<div class='t' style="left:295.50px;top:355.23px;font-size:14.5px;line-height:14.5px;color:#000;">869</div>
<div class='t' style="left:376.40px;top:355.23px;font-size:14.5px;line-height:14.5px;color:#000;">21 490</div>
<div class='t' style="left:449.30px;top:355.23px;font-size:14.5px;line-height:14.5px;color:#000;">18 674 810</div>
<div class='t' style="left:32.09px;top:376.23px;font-size:14.5px;line-height:14.5px;color:#000;transform:scaleX(1.0050);">Груша боксерская</div>
<div class='t' style="left:295.50px;top:376.23px;font-size:14.5px;line-height:14.5px;color:#000;">153</div>
<div class='t' style="left:376.40px;top:376.23px;font-size:14.5px;line-height:14.5px;color:#000;">12 990</div>
<div class='t' style="left:457.30px;top:376.23px;font-size:14.5px;line-height:14.5px;color:#000;">1 987 470</div>
<div class='t' style="left:32.08px;top:397.23px;font-size:14.5px;line-height:14.5px;color:#000;transform:scaleX(1.0241);">Перчатки боксерские</div>
<div class='t' style="left:303.50px;top:397.23px;font-size:14.5px;line-height:14.5px;color:#000;">98</div>
<div class='t' style="left:384.40px;top:397.23px;font-size:14.5px;line-height:14.5px;color:#000;">3 990</div>
<div class='t' style="left:469.30px;top:397.23px;font-size:14.5px;line-height:14.5px;color:#000;">391 020</div>
<div class='t' style="left:32.07px;top:418.23px;font-size:14.5px;line-height:14.5px;color:#000;transform:scaleX(1.0295);">Упоры для отжимания</div>
<div class='t' style="left:295.50px;top:418.23px;font-size:14.5px;line-height:14.5px;color:#000;">254</div>
<div class='t' style="left:396.40px;top:418.23px;font-size:14.5px;line-height:14.5px;color:#000;">590</div>
<div class='t' style="left:469.30px;top:418.23px;font-size:14.5px;line-height:14.5px;color:#000;">149 860</div>
<div class='t' style="left:32.11px;top:439.23px;font-size:14.5px;line-height:14.5px;color:#000;transform:scaleX(0.9922);">Скакалка скоростная</div>
<div class='t' style="left:296.50px;top:439.23px;font-size:14.5px;line-height:14.5px;color:#000;transform:scaleX(0.9583);">445</div>
<div class='t' style="left:396.40px;top:439.23px;font-size:14.5px;line-height:14.5px;color:#000;">390</div>
<div class='t' style="left:469.30px;top:439.23px;font-size:14.5px;line-height:14.5px;color:#000;">173 550</div>
<div class='t' style="left:32.09px;top:460.23px;font-size:14.5px;line-height:14.5px;color:#000;transform:scaleX(1.0091);">Скакалка со счетчиком</div>
<div class='t' style="left:295.45px;top:460.23px;font-size:14.5px;line-height:14.5px;color:#000;transform:scaleX(1.0455);">112</div>
<div class='t' style="left:396.40px;top:460.23px;font-size:14.5px;line-height:14.5px;color:#000;">890</div>
<div class='t' style="left:477.30px;top:460.23px;font-size:14.5px;line-height:14.5px;color:#000;">99 680</div>
<div class='t' style="left:33.10px;top:481.23px;font-size:14.5px;line-height:14.5px;color:#000;transform:scaleX(1.0319);">Турник в дверной проем</div>
<div class='t' style="left:295.50px;top:481.23px;font-size:14.5px;line-height:14.5px;color:#000;">341</div>
<div class='t' style="left:384.40px;top:481.23px;font-size:14.5px;line-height:14.5px;color:#000;">1 190</div>
<div class='t' style="left:470.30px;top:481.23px;font-size:14.5px;line-height:14.5px;color:#000;transform:scaleX(0.9808);">405 790</div>
<div class='t' style="left:373.87px;top:502.23px;font-size:14.5px;line-height:14.5px;color:#000;font-weight:700;transform:scaleX(0.9333);">ИТОГО</div>
<div class='t' style="left:442.01px;top:502.23px;font-size:14.5px;line-height:14.5px;color:#000;font-weight:700;transform:scaleX(0.9873);">105 039 410</div>
<div class='t' style="left:525.98px;top:271.23px;font-size:14.5px;line-height:14.5px;color:#000;transform:scaleX(1.0179);">=<span style="color:#2e75b6">D2</span>/<span style="color:#c65911">D13</span></div>
<div class='t' style="left:112.31px;top:679.20px;font-size:13px;line-height:13px;color:#00733d;font-weight:700;transform:scaleX(0.9916);">microexcel.ru</div>
<div class='t' style="left:8.33px;top:704.57px;font-size:12.2px;line-height:12.2px;color:#333;transform:scaleX(0.9733);">Укажите</div>
<div class='t' style="left:962.93px;top:704.77px;font-size:12.2px;line-height:12.2px;color:#a0a0a0;transform:scaleX(0.8667);">100 %</div><div class='a' style='left:525px;top:222px;width:111px;height:2px;background:#00733d;'></div>
<div class='a' style='left:28px;top:267px;width:2px;height:20px;background:#00733d;'></div>
<div class='a' style='left:422px;top:265px;width:102px;height:2px;background:#1f5fbf;'></div>
<div class='a' style='left:422px;top:287px;width:102px;height:2px;background:#1f5fbf;'></div>
<div class='a' style='left:422px;top:265px;width:2px;height:24px;background:#1f5fbf;'></div>
<div class='a' style='left:522px;top:265px;width:2px;height:24px;background:#1f5fbf;'></div>
<div class='a' style='left:420px;top:263px;width:7px;height:7px;background:#fff;'></div>
<div class='a' style='left:421px;top:264px;width:5px;height:5px;background:#1f5fbf;'></div>
<div class='a' style='left:520px;top:263px;width:7px;height:7px;background:#fff;'></div>
<div class='a' style='left:521px;top:264px;width:5px;height:5px;background:#1f5fbf;'></div>
<div class='a' style='left:420px;top:284px;width:7px;height:7px;background:#fff;'></div>
<div class='a' style='left:421px;top:285px;width:5px;height:5px;background:#1f5fbf;'></div>
<div class='a' style='left:520px;top:284px;width:7px;height:7px;background:#fff;'></div>
<div class='a' style='left:521px;top:285px;width:5px;height:5px;background:#1f5fbf;'></div>
<div class='a' style='left:524px;top:265px;width:114px;height:2px;background:#00733d;'></div>
<div class='a' style='left:524px;top:287px;width:114px;height:2px;background:#00733d;'></div>
<div class='a' style='left:524px;top:265px;width:2px;height:24px;background:#00733d;'></div>
<div class='a' style='left:636px;top:265px;width:2px;height:24px;background:#00733d;'></div>
<div class='a' style='left:634px;top:285px;width:6px;height:6px;background:#fff;'></div>
<div class='a' style='left:635px;top:286px;width:5px;height:5px;background:#00733d;'></div>
<div class='a' style='left:421px;top:495px;width:105px;height:2px;background:#c55a11;'></div>
<div class='a' style='left:421px;top:519px;width:105px;height:2px;background:#c55a11;'></div>
<div class='a' style='left:421px;top:495px;width:2px;height:26px;background:#c55a11;'></div>
<div class='a' style='left:524px;top:495px;width:2px;height:26px;background:#c55a11;'></div>
<div class='a' style='left:423px;top:497px;width:101px;height:2px;background:#fff;background-image:repeating-linear-gradient(90deg,#00733d 0 4.5px,#fff 4.5px 7.2px)'></div>
<div class='a' style='left:423px;top:517px;width:101px;height:2px;background:#fff;background-image:repeating-linear-gradient(90deg,#00733d 0 4.5px,#fff 4.5px 7.2px)'></div>
<div class='a' style='left:423px;top:499px;width:2px;height:18px;background:#fff;background-image:repeating-linear-gradient(180deg,#00733d 0 4.5px,#fff 4.5px 7.2px)'></div>
<div class='a' style='left:522px;top:499px;width:2px;height:18px;background:#fff;background-image:repeating-linear-gradient(180deg,#00733d 0 4.5px,#fff 4.5px 7.2px)'></div>
<div class='a' style='left:420px;top:493px;width:6px;height:6px;background:#c55a11;'></div>
<div class='a' style='left:520px;top:493px;width:6px;height:6px;background:#c55a11;'></div>
<div class='a' style='left:420px;top:515px;width:6px;height:6px;background:#c55a11;'></div>
<div class='a' style='left:520px;top:515px;width:6px;height:6px;background:#c55a11;'></div>
<div class='a' style='left:249px;top:163px;width:78px;height:35px;border:3px solid #f00;border-radius:9px'></div>
<div class='a' style='left:522px;top:260px;width:120px;height:34px;border:3px solid #f00;border-radius:11px'></div>
<div class='a' style='left:585px;top:271px;width:1px;height:15px;background:#000;'></div>
</body></html>
